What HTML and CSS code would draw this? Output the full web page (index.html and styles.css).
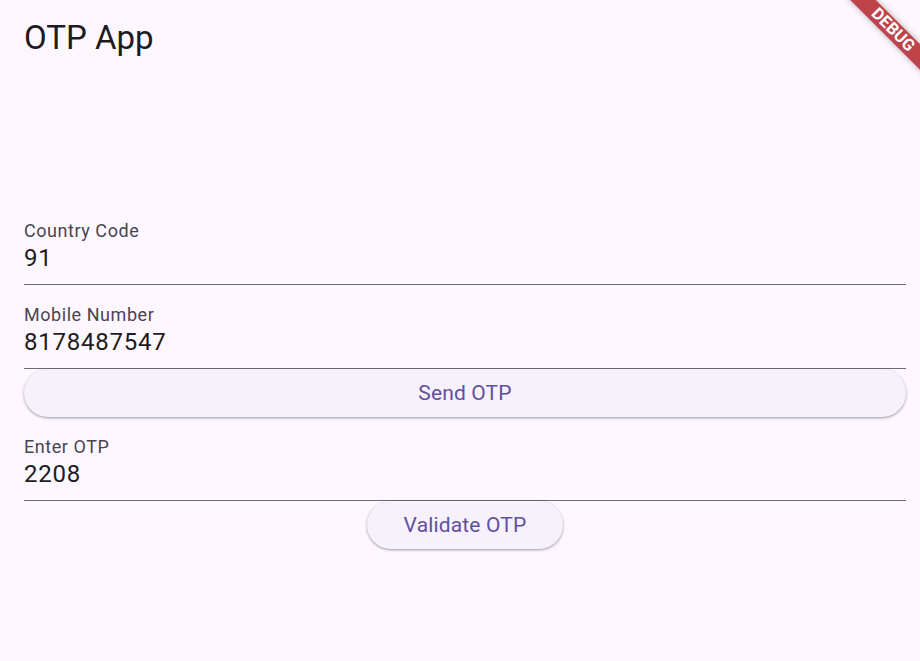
FILE: index.html
```html
<!DOCTYPE html>
<html lang="en">
<head>
<meta charset="utf-8">
<title>OTP App</title>
<link rel="stylesheet" href="styles.css">
</head>
<body>
  <div class="screen">
    <header class="app-bar">
      <h1 class="app-title">OTP App</h1>
    </header>
    <main class="content">
      <div class="field">
        <label class="field-label">Country Code</label>
        <div class="field-value">91</div>
      </div>
      <div class="field">
        <label class="field-label">Mobile Number</label>
        <div class="field-value">8178487547</div>
      </div>
      <button class="btn btn-full" type="button">Send OTP</button>
      <div class="field">
        <label class="field-label">Enter OTP</label>
        <div class="field-value">2208</div>
      </div>
      <div class="btn-row">
        <button class="btn" type="button">Validate OTP</button>
      </div>
    </main>
    <div class="debug-banner">DEBUG</div>
  </div>
</body>
</html>
```
FILE: styles.css
```css
* { box-sizing: border-box; }

html, body {
  margin: 0;
  padding: 0;
  background: #fef7ff;
}

body {
  font-family: Roboto, "Noto Sans", "Liberation Sans", sans-serif;
  color: #1d1b20;
}

.screen {
  position: relative;
  width: 920px;
  height: 661px;
  overflow: hidden;
  background: #fef7ff;
}

.app-bar {
  height: 76px;
  display: flex;
  align-items: center;
  padding-left: 24px;
}

.app-title {
  margin: 0;
  font-size: 33px;
  font-weight: 400;
  line-height: 40px;
  color: #1d1b20;
}

.content {
  display: flex;
  flex-direction: column;
  padding: 125px 14px 0 24px;
}

.field {
  height: 84px;
  padding-top: 18px;
  border-bottom: 1px solid #6f6b74;
  display: flex;
  flex-direction: column;
}

.field-label {
  font-size: 18px;
  line-height: 24px;
  letter-spacing: 0.55px;
  color: #49454f;
}

.field-value {
  font-size: 24px;
  line-height: 30px;
  letter-spacing: 0.75px;
  color: #1d1b20;
}

.btn {
  height: 48px;
  border: none;
  border-radius: 24px;
  background: #f6f1fb;
  color: #6150a0;
  font-family: Roboto, "Noto Sans", "Liberation Sans", sans-serif;
  font-size: 21px;
  font-weight: 400;
  letter-spacing: 0.15px;
  padding: 0 37px;
  box-shadow: 0 1px 2px rgba(0, 0, 0, 0.26), 0 1px 3px 1px rgba(0, 0, 0, 0.1);
  cursor: pointer;
}

.btn-full {
  width: 100%;
}

.btn-row {
  display: flex;
  justify-content: center;
}

.debug-banner {
  position: absolute;
  left: 833px;
  top: 21px;
  width: 120px;
  height: 18px;
  transform: rotate(45deg);
  background: rgba(176, 28, 34, 0.82);
  box-shadow: 0 0 6px rgba(0, 0, 0, 0.3);
  color: #fff;
  font-family: Roboto, "Liberation Sans", sans-serif;
  font-weight: 700;
  font-size: 16.5px;
  line-height: 18px;
  text-align: center;
  letter-spacing: 0.2px;
}
```
